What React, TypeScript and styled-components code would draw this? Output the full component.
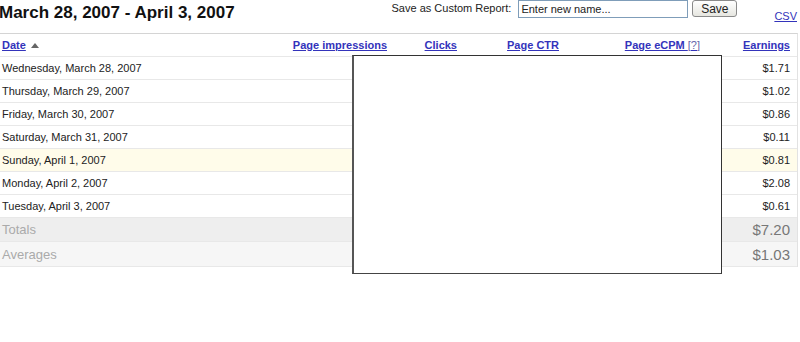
import { FC } from 'react'
import styled, { createGlobalStyle } from 'styled-components'

const GlobalStyle = createGlobalStyle`
  html, body {
    margin: 0;
    padding: 0;
    background: #fff;
  }
  body {
    font-family: "Liberation Sans", Arial, sans-serif;
    color: #222;
  }
`

const Page = styled.div`
  position: relative;
  width: 800px;
  height: 342px;
  overflow: hidden;
`

const TopBar = styled.div`
  display: flex;
  justify-content: space-between;
  align-items: flex-start;
  height: 33px;
`

const Title = styled.h1`
  margin: 3px 0 0 -1px;
  font-size: 17px;
  line-height: 20px;
  font-weight: bold;
  color: #111;
`

const SaveForm = styled.div`
  display: flex;
  align-items: flex-start;
  padding-right: 3px;
`

const SaveLabel = styled.span`
  font-size: 11px;
  line-height: 13px;
  margin-top: 2px;
  margin-right: 7px;
  color: #222;
`

const NameInput = styled.input`
  box-sizing: border-box;
  width: 170px;
  height: 18px;
  margin: 0;
  padding: 0 2px;
  border: 1px solid #7f9db9;
  font-family: "Liberation Sans", Arial, sans-serif;
  font-size: 11px;
  color: #222;
  outline: none;
`

const SaveButton = styled.button`
  box-sizing: border-box;
  width: 45px;
  height: 17px;
  margin: 0 0 0 4px;
  padding: 0;
  border: 1px solid #8a8a8a;
  border-radius: 3px;
  background: linear-gradient(#ffffff, #e6e6e0);
  font-family: "Liberation Sans", Arial, sans-serif;
  font-size: 12px;
  line-height: 14px;
  color: #222;
`

const CsvLink = styled.a`
  margin: 10px 0 0 37px;
  font-size: 11px;
  line-height: 13px;
  color: #3333bb;
  text-decoration: underline;
`

const Table = styled.div`
  width: 798px;
  border-top: 1px solid #d4d4d4;
  border-right: 1px solid #e2e2e2;
  box-sizing: border-box;
`

const Row = styled.div<{ $bg?: string; $height?: number }>`
  display: grid;
  grid-template-columns: 1fr 104px 70px 102px 141px 90px;
  align-items: center;
  height: ${({ $height = 23 }) => $height}px;
  box-sizing: border-box;
  border-bottom: 1px solid #e8e8e8;
  background: ${({ $bg = '#fff' }) => $bg};
`

const Cell = styled.div<{ $right?: boolean }>`
  padding: 0 ${({ $right }) => ($right ? '7px' : '0')} 0 ${({ $right }) => ($right ? '0' : '2px')};
  text-align: ${({ $right }) => ($right ? 'right' : 'left')};
  font-size: 11px;
  line-height: 13px;
  white-space: nowrap;
`

const HeadLink = styled.a`
  font-weight: bold;
  font-size: 11px;
  color: #3333bb;
  text-decoration: underline;
`

const Hint = styled.span`
  font-weight: normal;
  color: #6666aa;
`

const SortArrow = styled.span`
  display: inline-block;
  margin-left: 5px;
  width: 0;
  height: 0;
  border-left: 4px solid transparent;
  border-right: 4px solid transparent;
  border-bottom: 5px solid #666;
  vertical-align: 1px;
`

const SumLabel = styled(Cell)`
  font-size: 13px;
  line-height: 15px;
  color: #aaa;
`

const SumValue = styled(Cell)`
  font-size: 15px;
  line-height: 17px;
  color: #777;
`

const Popup = styled.div`
  position: absolute;
  left: 352px;
  top: 55px;
  width: 370px;
  height: 219px;
  box-sizing: border-box;
  background: #fff;
  border: 1px solid #333;
  border-left: 2px solid #555;
  border-bottom-color: #444;
`

const days = [
  { date: 'Wednesday, March 28, 2007', earnings: '$1.71' },
  { date: 'Thursday, March 29, 2007', earnings: '$1.02' },
  { date: 'Friday, March 30, 2007', earnings: '$0.86' },
  { date: 'Saturday, March 31, 2007', earnings: '$0.11' },
  { date: 'Sunday, April 1, 2007', earnings: '$0.81', weekend: true },
  { date: 'Monday, April 2, 2007', earnings: '$2.08' },
  { date: 'Tuesday, April 3, 2007', earnings: '$0.61' },
]

const App: FC = () => (
  <Page>
    <GlobalStyle />
    <TopBar>
      <Title>March 28, 2007 - April 3, 2007</Title>
      <SaveForm>
        <SaveLabel>Save as Custom Report:</SaveLabel>
        <NameInput defaultValue="Enter new name..." />
        <SaveButton type="button">Save</SaveButton>
        <CsvLink href="#">CSV</CsvLink>
      </SaveForm>
    </TopBar>
    <Table>
      <Row>
        <Cell>
          <HeadLink href="#">Date</HeadLink>
          <SortArrow />
        </Cell>
        <Cell $right><HeadLink href="#">Page impressions</HeadLink></Cell>
        <Cell $right><HeadLink href="#">Clicks</HeadLink></Cell>
        <Cell $right><HeadLink href="#">Page CTR</HeadLink></Cell>
        <Cell $right><HeadLink href="#">Page eCPM <Hint>[?]</Hint></HeadLink></Cell>
        <Cell $right><HeadLink href="#">Earnings</HeadLink></Cell>
      </Row>
      {days.map((d) => (
        <Row key={d.date} $bg={d.weekend ? '#fffcea' : '#fff'}>
          <Cell>{d.date}</Cell>
          <Cell $right />
          <Cell $right />
          <Cell $right />
          <Cell $right />
          <Cell $right>{d.earnings}</Cell>
        </Row>
      ))}
      <Row $bg="#eeeeee" $height={24}>
        <SumLabel>Totals</SumLabel>
        <Cell $right />
        <Cell $right />
        <Cell $right />
        <Cell $right />
        <SumValue $right>$7.20</SumValue>
      </Row>
      <Row $bg="#f6f6f6" $height={25}>
        <SumLabel>Averages</SumLabel>
        <Cell $right />
        <Cell $right />
        <Cell $right />
        <Cell $right />
        <SumValue $right>$1.03</SumValue>
      </Row>
    </Table>
    <Popup />
  </Page>
)

export default App
